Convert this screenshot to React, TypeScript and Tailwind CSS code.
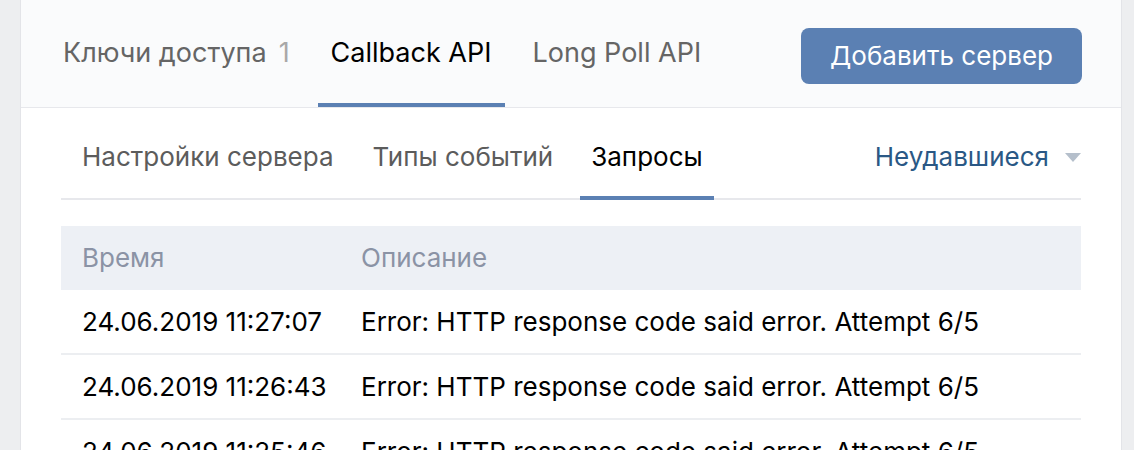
import React from "react"

const rows = [
  { time: "24.06.2019 11:27:07", text: "Error: HTTP response code said error. Attempt 6/5" },
  { time: "24.06.2019 11:26:43", text: "Error: HTTP response code said error. Attempt 6/5" },
  { time: "24.06.2019 11:25:46", text: "Error: HTTP response code said error. Attempt 6/5" },
]

export default function App() {
  return (
    <div
      className="h-[450px] overflow-hidden bg-[#edeef0] pl-[20px] pr-[12px]"
      style={{ fontFamily: "Inter, 'Liberation Sans', sans-serif" }}
    >
      <div className="mt-[-8px] rounded-lg border border-[#e3e4e8] bg-white">
        {/* top tabs */}
        <div className="flex h-[115px] items-end justify-between rounded-t-lg border-b border-[#e7e8ec] bg-[#fafbfc] pl-[28px] pr-[39px]">
          <div className="flex gap-[14px] text-[27px] leading-none">
            <div className="flex h-[110px] items-center px-[14px] text-[#656565]">
              Ключи доступа <span className="ml-[12px] text-[#a8a8a8]">1</span>
            </div>
            <div className="flex h-[110px] items-center border-b-[4px] border-[#5b80b3] px-[13px] pt-[4px] text-black">
              Callback API
            </div>
            <div className="flex h-[110px] items-center px-[14px] text-[#656565]">Long Poll API</div>
          </div>
          <button className="mb-[23px] h-[56px] rounded-lg bg-[#5b80b3] px-[29px] text-[26px] leading-none text-white">
            Добавить сервер
          </button>
        </div>

        <div className="px-[40px]">
          {/* sub tabs */}
          <div className="flex items-end justify-between border-b-2 border-[#e7e8ec]">
            <div className="flex gap-[15px] pl-[9px] text-[26px] leading-none">
              <div className="flex h-[90px] items-center px-[12px] pt-[8px] text-[#5c5c5c]">Настройки сервера</div>
              <div className="flex h-[90px] items-center px-[12px] pt-[8px] text-[#5c5c5c]">Типы событий</div>
              <div className="mb-[-2px] flex h-[92px] items-center border-b-[4px] border-[#5b80b3] px-[11px] pt-[10px] text-black">
                Запросы
              </div>
            </div>
            <div className="flex h-[90px] items-center gap-[16px] pt-[8px] text-[26px] leading-none text-[#2a5885]">
              Неудавшиеся
              <svg width="16" height="9" viewBox="0 0 16 9">
                <path d="M0 0 H16 L8 9 Z" fill="#b5bfcb" />
              </svg>
            </div>
          </div>

          {/* table */}
          <div className="mt-[26px] text-[26px] leading-none">
            <div className="flex h-[64px] items-center bg-[#edf0f5] text-[#8b93a5]">
              <div className="w-[279px] pl-[21px]">Время</div>
              <div className="pl-[21px]">Описание</div>
            </div>
            {rows.map((r) => (
              <div key={r.time} className="flex h-[65px] items-center border-b-2 border-[#eceef1] text-black">
                <div className="w-[279px] pl-[21px]">{r.time}</div>
                <div className="pl-[21px]">{r.text}</div>
              </div>
            ))}
          </div>
        </div>
      </div>
    </div>
  )
}
